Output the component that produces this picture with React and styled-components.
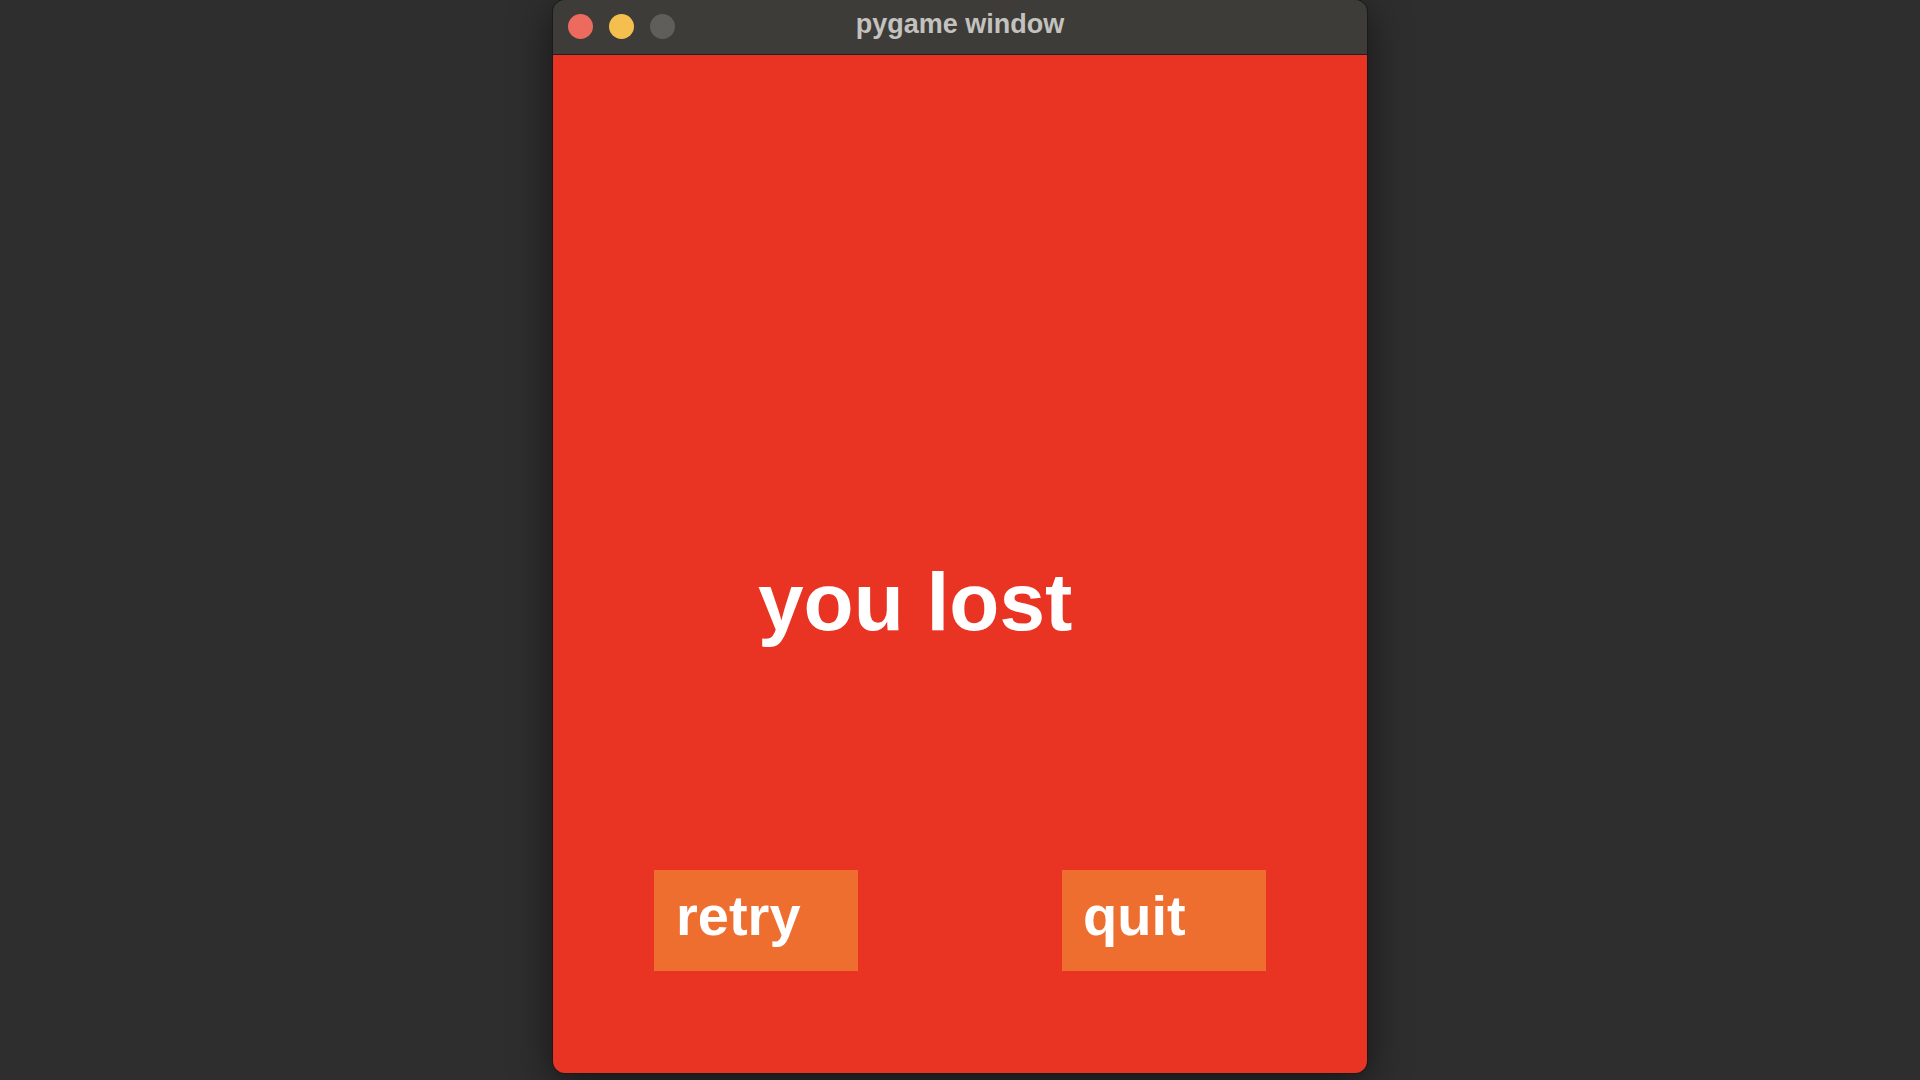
import React from "react";
import styled, { createGlobalStyle } from "styled-components";

const GlobalStyle = createGlobalStyle`
  html, body {
    margin: 0;
    padding: 0;
    background: #2e2e2e;
    font-family: "Liberation Sans", Arial, sans-serif;
  }
`;

const Desktop = styled.div`
  width: 1920px;
  height: 1080px;
  display: flex;
  justify-content: center;
  align-items: flex-start;
  background: #2e2e2e;
  overflow: hidden;
`;

const Window = styled.div`
  width: 814px;
  height: 1073px;
  border-radius: 12px;
  overflow: hidden;
  display: flex;
  flex-direction: column;
  box-shadow: 0 0 0 1px #1a1a1a, 0 10px 40px rgba(0, 0, 0, 0.55);
`;

const TitleBar = styled.div`
  height: 54px;
  flex: none;
  background: #3d3c39;
  border-bottom: 1px solid #221f1d;
  display: flex;
  align-items: center;
  padding-left: 15px;
  position: relative;
`;

const Lights = styled.div`
  display: flex;
  gap: 16px;
  margin-top: -2px;
`;

const Light = styled.span`
  width: 25px;
  height: 25px;
  border-radius: 50%;
  background: ${(p) => p.color};
`;

const Title = styled.div`
  position: absolute;
  left: 0;
  right: 0;
  top: 11px;
  text-align: center;
  color: #c4c2bf;
  font-weight: bold;
  font-size: 27px;
  line-height: 1;
  pointer-events: none;
`;

const Screen = styled.div`
  flex: 1;
  background: #e93424;
  display: flex;
  flex-direction: column;
  padding-top: 506px;
`;

const Message = styled.div`
  color: #ffffff;
  font-weight: bold;
  font-size: 82px;
  line-height: 1;
  padding-left: 205px;
`;

const ButtonRow = styled.div`
  display: flex;
  gap: 204px;
  padding-left: 101px;
  margin-top: 227px;
`;

const Button = styled.div`
  width: 204px;
  height: 101px;
  box-sizing: border-box;
  background: #ee6e2f;
  color: #ffffff;
  font-weight: bold;
  font-size: 56px;
  line-height: 1;
  padding: 18px 0 0 ${(p) => p.inset}px;
`;

export default function App() {
  return (
    <>
      <GlobalStyle />
      <Desktop>
        <Window>
          <TitleBar>
            <Lights>
              <Light color="#ec6a5e" />
              <Light color="#f4bf4f" />
              <Light color="#5f5e5b" />
            </Lights>
            <Title>pygame window</Title>
          </TitleBar>
          <Screen>
            <Message>you lost</Message>
            <ButtonRow>
              <Button inset={22}>retry</Button>
              <Button inset={21}>quit</Button>
            </ButtonRow>
          </Screen>
        </Window>
      </Desktop>
    </>
  );
}
